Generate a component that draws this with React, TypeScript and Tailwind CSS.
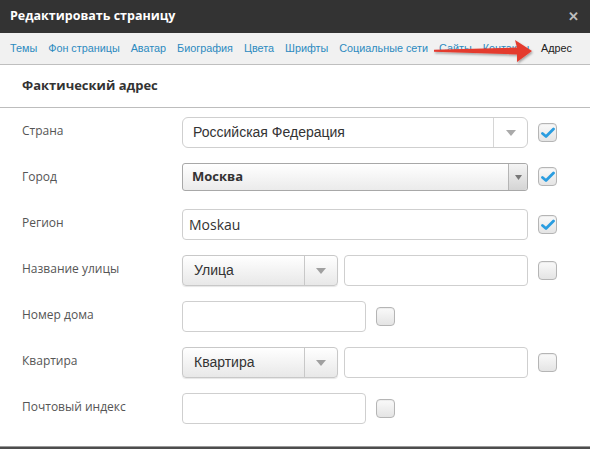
import React from "react";

const font = { fontFamily: '"Open Sans", "Noto Sans", sans-serif' };
const arial = { fontFamily: '"Liberation Sans", Arial, sans-serif' };

function Check({ checked }: { checked?: boolean }) {
  return (
    <div className="w-[19px] h-[19px] rounded-[4px] border border-[#b5b5b5] bg-gradient-to-b from-[#fafafa] to-[#e4e4e4] shadow-[inset_0_1px_1px_rgba(0,0,0,0.06)] flex items-center justify-center shrink-0">
      {checked && (
        <svg width="14" height="12" viewBox="0 0 14 12">
          <path d="M1.5 6.5 L5 9.5 L12.5 2" fill="none" stroke="#2a9de0" strokeWidth="2.8" strokeLinecap="round" strokeLinejoin="round" />
        </svg>
      )}
    </div>
  );
}

function Caret({ color = "#999" }: { color?: string }) {
  return (
    <svg width="10" height="6" viewBox="0 0 10 6">
      <path d="M0 0 L10 0 L5 6 Z" fill={color} />
    </svg>
  );
}

function Row({ label, children, top }: { label: string; children: React.ReactNode; top?: boolean }) {
  return (
    <div className="flex items-center h-[31px]">
      <div className="w-[182px] text-[12px] text-[#555] pl-[22px] -mt-[3px] shrink-0">{label}</div>
      <div className={"flex h-full " + (top ? "items-start" : "items-center")}>{children}</div>
    </div>
  );
}

function SmallSelect({ text }: { text: string }) {
  return (
    <div className="w-[156px] h-[31px] rounded-[4px] border border-[#c8c8c8] bg-gradient-to-b from-[#ffffff] to-[#e8e8e8] shadow-[0_1px_1px_rgba(0,0,0,0.1)] flex items-center shrink-0">
      <div className="flex-1 pl-[11px] text-[14px] text-[#333]" style={arial}>{text}</div>
      <div className="w-[33px] h-full border-l border-[#c8c8c8] flex items-center justify-center">
        <Caret color="#a0a0a0" />
      </div>
    </div>
  );
}

function TextBox({ w }: { w: string }) {
  return <div className={w + " h-[31px] rounded-[4px] border border-[#cfcfcf] bg-white shrink-0"} />;
}

export default function App() {
  return (
    <div className="w-[590px] h-[449px] bg-[#4d4d4d] relative overflow-hidden" style={font}>
      <div className="h-[447px] bg-white flex flex-col border-b border-[#9a9a9a]">
        <div className="h-[33px] bg-[#333333] flex items-center justify-between pl-[10px] pr-[11px] shrink-0">
          <div className="text-white font-bold text-[12.5px] -mt-[1px]">Редактировать страницу</div>
          <div className="text-[#bdbdbd] font-bold text-[13px] leading-none">✕</div>
        </div>
        <div className="h-[32px] bg-[#f1f1f1] border-b border-[#bfbfbf] flex items-center pl-[10px] gap-[11px] text-[10.8px] text-[#2c8ac0] relative shrink-0" style={arial}>
          <span>Темы</span>
          <span>Фон страницы</span>
          <span>Аватар</span>
          <span>Биография</span>
          <span>Цвета</span>
          <span>Шрифты</span>
          <span>Социальные сети</span>
          <span>Сайты</span>
          <span>Контакты</span>
          <span className="absolute left-[541px] text-[#222]">Адрес</span>
          <svg className="absolute left-[430px] top-[5px] overflow-visible" width="106" height="26" viewBox="0 0 106 26">
            <defs>
              <filter id="sh" x="-10%" y="-30%" width="120%" height="170%">
                <feDropShadow dx="1" dy="1.5" stdDeviation="1" floodColor="#000" floodOpacity="0.35" />
              </filter>
            </defs>
            <path d="M4 11.8 L87 9.6 L85 2 L102 13 L87 24 L87 16.4 L4 13.8 Z" fill="#e43a2e" filter="url(#sh)" />
          </svg>
        </div>
        <div className="h-[43px] border-b border-[#bdbdbd] flex items-center pl-[22px] shrink-0">
          <div className="font-bold text-[13px] text-[#333] -mt-[1px]">Фактический адрес</div>
        </div>
        <div className="flex flex-col gap-[15px] pt-[9px]">
          <Row label="Страна">
            <div className="w-[346px] h-[31px] rounded-[6px] border border-[#cfcfcf] bg-white flex items-center shrink-0">
              <div className="flex-1 pl-[10px] text-[14px] text-[#333]" style={arial}>Российская Федерация</div>
              <div className="w-[34px] h-full border-l border-[#d6d6d6] flex items-center justify-center">
                <Caret color="#aaa" />
              </div>
            </div>
            <div className="ml-[10px]"><Check checked /></div>
          </Row>
          <Row label="Город" top>
            <div className="w-[346px] h-[28px] rounded-[3px] border border-[#a8a8a8] bg-gradient-to-b from-[#ffffff] to-[#ebebeb] flex items-center shrink-0">
              <div className="flex-1 pl-[9px] text-[13px] font-bold text-[#333]">Москва</div>
              <div className="w-[19px] h-full border-l border-[#b5b5b5] bg-gradient-to-b from-[#f4f4f4] to-[#d4d4d4] rounded-r-[3px] flex items-center justify-center">
                <svg width="7" height="5" viewBox="0 0 7 5"><path d="M0 0 L7 0 L3.5 5 Z" fill="#777" /></svg>
              </div>
            </div>
            <div className="ml-[10px] mt-[4px]"><Check checked /></div>
          </Row>
          <Row label="Регион">
            <div className="w-[346px] h-[31px] rounded-[4px] border border-[#cfcfcf] bg-white flex items-center pl-[6px] text-[14px] text-[#333] shrink-0">Moskau</div>
            <div className="ml-[10px]"><Check checked /></div>
          </Row>
          <Row label="Название улицы">
            <SmallSelect text="Улица" />
            <div className="ml-[6px]"><TextBox w="w-[184px]" /></div>
            <div className="ml-[10px]"><Check /></div>
          </Row>
          <Row label="Номер дома">
            <TextBox w="w-[184px]" />
            <div className="ml-[10px]"><Check /></div>
          </Row>
          <Row label="Квартира">
            <SmallSelect text="Квартира" />
            <div className="ml-[6px]"><TextBox w="w-[184px]" /></div>
            <div className="ml-[10px]"><Check /></div>
          </Row>
          <Row label="Почтовый индекс">
            <TextBox w="w-[184px]" />
            <div className="ml-[10px]"><Check /></div>
          </Row>
        </div>
      </div>
    </div>
  );
}
